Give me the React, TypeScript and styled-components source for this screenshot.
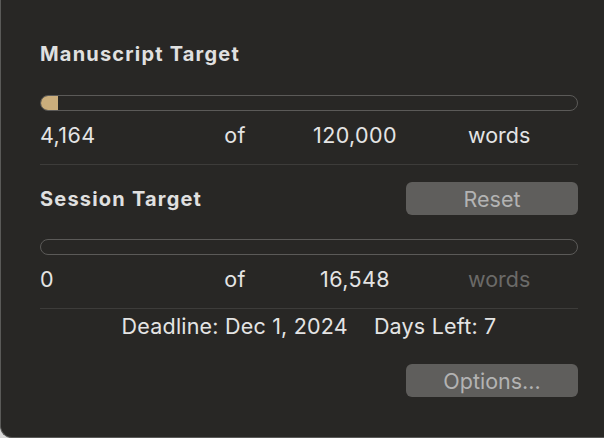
import React, { FC } from 'react'
import styled, { createGlobalStyle } from 'styled-components'

const GlobalStyle = createGlobalStyle`
  html, body {
    margin: 0;
    padding: 0;
    background: #d9d9d9;
  }
  body {
    font-family: Inter, "Noto Sans", "Liberation Sans", sans-serif;
  }
`

interface RowProps {
  current: string
  target: string
  dimUnit?: boolean
}

const CountRow: FC<RowProps> = ({ current, target, dimUnit }) => (
  <Counts>
    <Cell>{current}</Cell>
    <Cell $center>of</Cell>
    <Cell $center>{target}</Cell>
    <Unit $dim={dimUnit}>words</Unit>
  </Counts>
)

const ProgressBar: FC<{ value: number; max: number }> = ({ value, max }) => (
  <Track>
    {value > 0 && <Fill style={{ width: `${(value / max) * 100}%` }} />}
  </Track>
)

const App: FC = () => (
  <>
    <GlobalStyle />
    <Window>
      <Title>Manuscript Target</Title>
      <BarWrap>
        <ProgressBar value={4164} max={120000} />
      </BarWrap>
      <CountRow current="4,164" target="120,000" />
      <Divider />

      <SessionHeader>
        <Title>Session Target</Title>
        <Button>Reset</Button>
      </SessionHeader>
      <BarWrap $gap={24}>
        <ProgressBar value={0} max={16548} />
      </BarWrap>
      <CountRow current="0" target="16,548" dimUnit />
      <Divider />

      <Deadline>
        <span>Deadline: Dec 1, 2024</span>
        <span>Days Left: 7</span>
      </Deadline>
      <Footer>
        <Button>Options...</Button>
      </Footer>
    </Window>
  </>
)

const Window = styled.div`
  box-sizing: border-box;
  width: 604px;
  height: 438px;
  background: #282725;
  border-left: 1px solid #5a5a58;
  border-bottom: 1px solid #5a5a58;
  border-bottom-left-radius: 12px;
  padding: 43px 26px 0 39px;
  color: #e2e2e2;
  display: flex;
  flex-direction: column;
`

const Title = styled.div`
  font-size: 20px;
  font-weight: 700;
  line-height: 22px;
  color: #e0e0e0;
  letter-spacing: 1.2px;
`

const BarWrap = styled.div<{ $gap?: number }>`
  margin-top: ${(p) => p.$gap ?? 30}px;
`

const Track = styled.div`
  box-sizing: border-box;
  height: 16px;
  border: 1.5px solid #5b5a58;
  border-radius: 8px;
  overflow: hidden;
  position: relative;
`

const Fill = styled.div`
  position: absolute;
  left: -1.5px;
  top: -1.5px;
  bottom: -1.5px;
  min-width: 17px;
  background: #cbae7c;
`

const Counts = styled.div`
  margin-top: 12px;
  display: grid;
  grid-template-columns: 160px 70px 170px 1fr;
  font-size: 21.5px;
  line-height: 24px;
  letter-spacing: 0.4px;
  color: #e4e4e4;
`

const Cell = styled.div<{ $center?: boolean }>`
  text-align: ${(p) => (p.$center ? 'center' : 'left')};
`

const Unit = styled.div<{ $dim?: boolean }>`
  padding-left: 28px;
  letter-spacing: 0;
  color: ${(p) => (p.$dim ? '#6b6a68' : '#e4e4e4')};
`

const Divider = styled.div`
  margin-top: 17px;
  height: 1px;
  background: #3d3c3a;
`

const SessionHeader = styled.div`
  margin-top: 17px;
  display: flex;
  align-items: center;
  justify-content: space-between;
`

const Button = styled.button`
  width: 172px;
  height: 33px;
  border: none;
  border-radius: 6px;
  background: #5f5e5c;
  color: #b3b3b3;
  font-family: inherit;
  font-size: 21.5px;
  padding: 0;
`

const Deadline = styled.div`
  margin-top: 5px;
  display: flex;
  justify-content: center;
  gap: 26px;
  font-size: 21.5px;
  line-height: 24px;
  letter-spacing: 0.2px;
  color: #e4e4e4;
`

const Footer = styled.div`
  margin-top: 26px;
  display: flex;
  justify-content: flex-end;
`

export default App
